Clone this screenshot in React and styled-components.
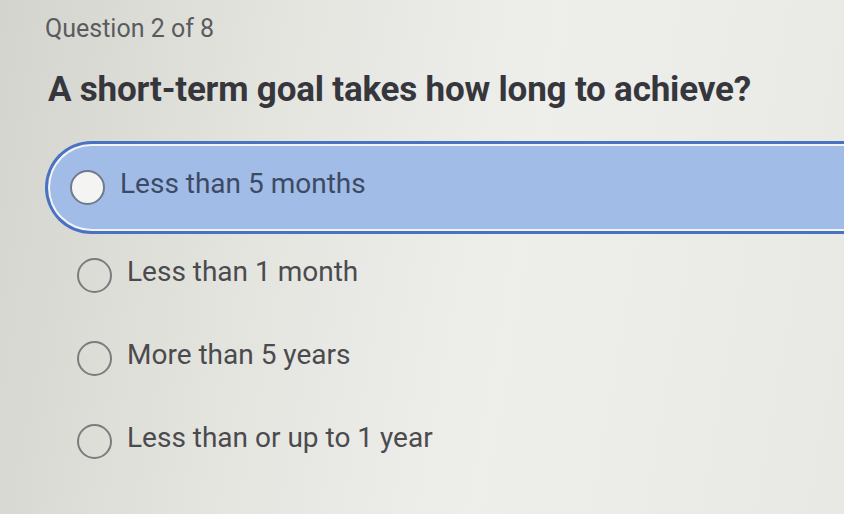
import React, {useState} from 'react';
import styled, {createGlobalStyle} from 'styled-components';

const GlobalStyle = createGlobalStyle`
  html, body {
    margin: 0;
    padding: 0;
    height: 100%;
    overflow: hidden;
  }

  body {
    background: linear-gradient(100deg, #d4d4ce 0%, #e4e4df 30%, #eeeeeb 60%, #e8e8e5 100%);
    font-family: Roboto, "Liberation Sans", sans-serif;
  }
`;

const Page = styled.main`
  padding: 14px 0 0 45px;
  overflow: hidden;
`;

const Counter = styled.div`
  font-size: 25px;
  color: #5b5b5e;
  line-height: 30px;
`;

const Prompt = styled.h1`
  margin: 26px 0 0 3px;
  font-size: 35px;
  font-weight: 700;
  line-height: 40px;
  color: #36363d;
  letter-spacing: -0.2px;
`;

const Choices = styled.div`
  display: flex;
  flex-direction: column;
  margin-top: 31px;
  margin-right: -20px;
`;

const Choice = styled.label`
  display: block;
  cursor: pointer;
  border: 3px solid ${({$selected}) => ($selected ? '#4a72c2' : 'transparent')};
  border-right: none;
  border-radius: 48px 0 0 48px;
  padding: 2px;
  background: ${({$selected}) => ($selected ? '#f1f3f7' : 'transparent')};
`;

const ChoiceBody = styled.div`
  display: flex;
  align-items: center;
  gap: 15px;
  height: ${({$selected}) => ($selected ? '83px' : '73px')};
  padding-left: ${({$selected}) => ($selected ? '20px' : '27px')};
  border-radius: 44px 0 0 44px;
  background: ${({$selected}) => ($selected ? '#a2bce8' : 'transparent')};
`;

const Radio = styled.span`
  flex: none;
  width: 31px;
  height: 31px;
  border-radius: 50%;
  border: 2px solid ${({$selected}) => ($selected ? '#6f7a8c' : '#7c7c7e')};
  background: ${({$selected}) => ($selected ? '#f4f4f2' : 'transparent')};
`;

const ChoiceText = styled.span`
  font-size: 28px;
  color: ${({$selected}) => ($selected ? '#3d4a63' : '#4b4b4e')};
  position: relative;
  top: -4px;
`;

const answers = [
  'Less than 5 months',
  'Less than 1 month',
  'More than 5 years',
  'Less than or up to 1 year',
];

export default function App() {
  const [picked, setPicked] = useState(0);

  return (
    <>
      <GlobalStyle />
      <Page>
        <Counter>Question 2 of 8</Counter>
        <Prompt>A short-term goal takes how long to achieve?</Prompt>
        <Choices>
          {answers.map((text, i) => (
            <Choice key={text} $selected={picked === i} onClick={() => setPicked(i)}>
              <ChoiceBody $selected={picked === i}>
                <Radio $selected={picked === i} />
                <ChoiceText $selected={picked === i}>{text}</ChoiceText>
              </ChoiceBody>
            </Choice>
          ))}
        </Choices>
      </Page>
    </>
  );
}
